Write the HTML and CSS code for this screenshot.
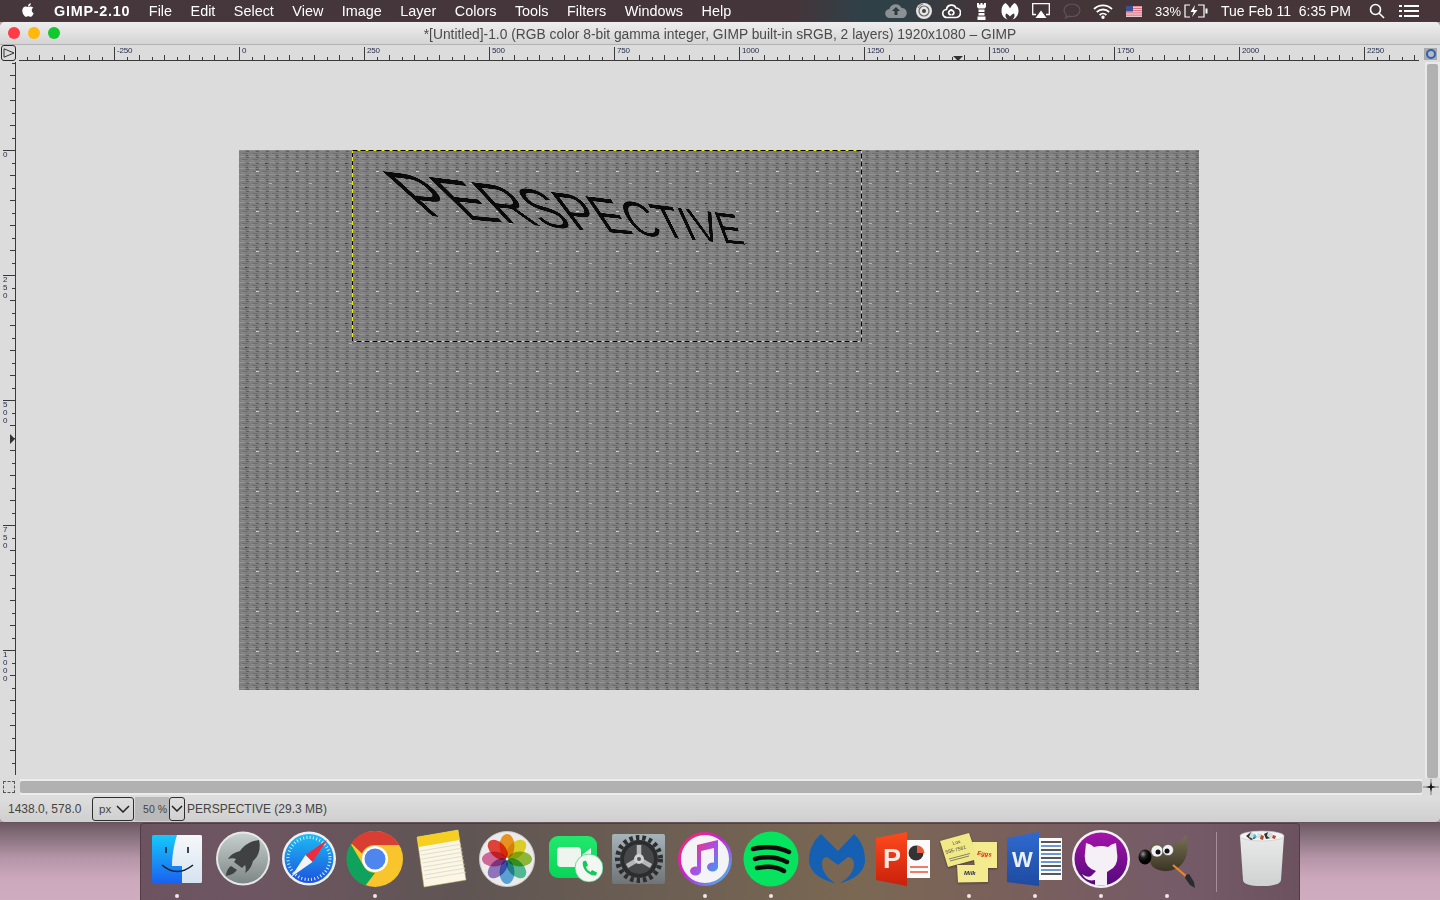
FILE: index.html
```html
<!DOCTYPE html>
<html lang="en">
<head>
<meta charset="utf-8">
<title>GIMP-2.10</title>
<link rel="stylesheet" href="styles.css">
</head>
<body>
<header class="menubar">
  <svg class="apple" viewBox="0 0 24 24" width="18" height="18"><path fill="#fff" d="M17.05 20.28c-.98.95-2.05.8-3.08.35-1.09-.46-2.09-.48-3.24 0-1.44.62-2.2.44-3.06-.35C2.79 15.25 3.51 7.59 9.05 7.31c1.35.07 2.29.74 3.08.8 1.18-.24 2.31-.93 3.57-.84 1.51.12 2.65.72 3.4 1.8-3.12 1.87-2.38 5.98.48 7.13-.57 1.5-1.31 2.99-2.54 4.09zM12.03 7.25c-.15-2.23 1.66-4.07 3.74-4.25.29 2.58-2.34 4.5-3.74 4.25z"/></svg>
  <nav class="menus">
    <span class="appname">GIMP-2.10</span><span>File</span><span>Edit</span><span>Select</span><span>View</span><span>Image</span><span>Layer</span><span>Colors</span><span>Tools</span><span>Filters</span><span>Windows</span><span>Help</span>
  </nav>
  <div class="status-icons">
    <svg width="22" height="16" viewBox="0 0 22 16"><path fill="#8b9094" d="M5 15a4.500 4.500 0 0 1-.6-9A6.500 6.500 0 0 1 16.600 5 5 5 0 0 1 17 15z"/><path fill="#2f3a40" d="M11 4l4 4h-2.500v4h-3V8H7z"/></svg>
    <svg width="18" height="18" viewBox="0 0 18 18"><circle cx="9" cy="9" r="8" fill="#e6e6e6"/><circle cx="9" cy="9" r="5" fill="none" stroke="#666" stroke-width="1.200"/><circle cx="9" cy="9" r="2" fill="#444"/><path d="M3 6a7 7 0 0 1 5-4" stroke="#777" fill="none"/></svg>
    <svg width="20" height="16" viewBox="0 0 20 16" fill="none" stroke="#fff" stroke-width="1.700"><path d="M6 14.500a4 4 0 0 1-.5-8A5 5 0 0 1 15 5a4.700 4.700 0 0 1-.5 9.500z"/><path d="M12.500 8.500C11 6.500 9 6.800 8 8.500S8 12 10 11.500M8 8.500c1.500-2 3.500-1.700 4.500 0s0 3.500-2 3"/></svg>
    <svg width="11" height="17" viewBox="0 0 11 17" fill="#fff"><path d="M1 0h2v1.500h1.500V0h2v1.500H8V0h2v4L8.500 5.500h-6L1 4zM2.500 6.500h6V9h-6zM2.500 10h6v2.500h-6zM1.500 13.500h8V17h-8z"/></svg>
    <svg width="18" height="17" viewBox="0 0 18 17"><path fill="#fff" d="M4.500 0C2 1.500.5 4 .5 8c0 4 2.500 7.500 6 8.500-2-1.500-2.500-4-1.500-6 1 0 3 1.500 4 3 1-1.500 3-3 4-3 1 2 .5 4.500-1.500 6 3.500-1 6-4.500 6-8.500s-1.500-6.500-4-8C11.500 1.500 10 3.500 9 5.500 8 3.500 6.500 1.500 4.500 0z"/></svg>
    <svg width="18" height="16" viewBox="0 0 18 16"><path fill="none" stroke="#fff" stroke-width="1.300" d="M4 11.500H.7V.7h16.600v10.800H14"/><path fill="#fff" d="M9 7.500l5.500 7.500h-11z"/></svg>
    <svg width="18" height="16" viewBox="0 0 18 16"><path fill="none" stroke="#5e5659" stroke-width="1.200" d="M9 1c4.500 0 8 2.700 8 6.200S13.500 13.500 9 13.500c-1 0-2-.2-3-.4L2.500 15l1-3C1.800 10.900 1 9.200 1 7.200 1 3.700 4.500 1 9 1z"/></svg>
    <svg width="20" height="15" viewBox="0 0 20 15" fill="none" stroke="#fff" stroke-width="1.800"><path d="M1 5a13 13 0 0 1 18 0M3.800 8a9 9 0 0 1 12.400 0M6.600 11a5 5 0 0 1 6.800 0"/><circle cx="10" cy="13.300" r=".8" fill="#fff"/></svg>
    <svg width="16" height="11" viewBox="0 0 16 11"><rect width="16" height="11" fill="#f2f0f2"/><path stroke="#d8566a" stroke-width=".9" d="M0 .8h16M0 2.600h16M0 4.400h16M0 6.200h16M0 8h16M0 9.800h16"/><rect width="7" height="5.500" fill="#3f4f96"/></svg>
    <span class="battery-pct">33%</span>
    <svg class="battery" width="24" height="14" viewBox="0 0 24 14" fill="none" stroke="#fff" stroke-width="1.200"><path d="M6 1H1v12h5M14 1h6v12h-6"/><path fill="#fff" stroke="none" d="M11 1L6.500 8h3.200L8 13l5.500-7H10z M21.500 4.500h2v5h-2z"/></svg>
    <span class="clock">Tue Feb 11&nbsp; 6:35 PM</span>
    <svg class="search" width="16" height="16" viewBox="0 0 16 16" fill="none" stroke="#fff" stroke-width="1.600"><circle cx="6.500" cy="6.500" r="5"/><path d="M10.200 10.200L15 15"/></svg>
    <svg class="list" width="20" height="12" viewBox="0 0 20 12" fill="#fff"><rect y="0" width="3" height="2"/><rect y="5" width="3" height="2"/><rect y="10" width="3" height="2"/><rect x="5" y="0" width="15" height="2"/><rect x="5" y="5" width="15" height="2"/><rect x="5" y="10" width="15" height="2"/></svg>
  </div>
</header>

<main class="window">
  <div class="titlebar">
    <div class="lights"><i class="light red"></i><i class="light amber"></i><i class="light green"></i></div>
    <div class="title">*[Untitled]-1.0 (RGB color 8-bit gamma integer, GIMP built-in sRGB, 2 layers) 1920x1080 – GIMP</div>
  </div>

  <div class="row-top">
    <div class="corner"><svg width="12" height="10" viewBox="0 0 12 10"><path fill="none" stroke="#333" d="M1 .8v8.400L11 5z"/></svg></div>
    <div class="ruler-h">
      <span class="hspacer"></span>
      <span class="hcell">-250</span><span class="hcell">0</span><span class="hcell">250</span><span class="hcell">500</span><span class="hcell">750</span><span class="hcell">1000</span><span class="hcell">1250</span><span class="hcell">1500</span><span class="hcell">1750</span><span class="hcell">2000</span><span class="hcell">2250</span>
      <i class="pointer-h"></i>
    </div>
    <div class="nav-col"><span class="nav-btn"><i></i></span></div>
  </div>

  <div class="row-mid">
    <div class="ruler-v">
      <span class="vspacer"></span>
      <span class="vcell">0</span><span class="vcell">2<br>5<br>0</span><span class="vcell">5<br>0<br>0</span><span class="vcell">7<br>5<br>0</span><span class="vcell">1<br>0<br>0<br>0</span>
      <i class="pointer-v"></i>
    </div>
    <div class="stage">
      <div class="canvas">
        <svg class="texture" width="960" height="540" viewBox="0 0 960 540">
          <defs>
            <pattern id="tile" width="40" height="40" patternUnits="userSpaceOnUse">
              <rect width="40" height="40" fill="#7f7f7f"/>
              <g fill="none" stroke-width="1">
                <g stroke-dasharray="6 4">
                  <path stroke="#939393" d="M0 .5h40M0 6.500h40M0 12.500h40M0 18.500h40M0 24.500h40M0 30.500h40M0 36.500h40"/>
                  <path stroke="#6e6e6e" d="M3 3.500h40M-7 3.500h10M3 9.500h40M-7 9.500h10M3 15.500h40M-7 15.500h10M3 21.500h40M-7 21.500h10M3 27.500h40M-7 27.500h10M3 33.500h40M-7 33.500h10M3 39.500h40M-7 39.500h10"/>
                </g>
                <g stroke-dasharray="3 7">
                  <path stroke="#5e5e5e" d="M7 1.500h40M-3 1.500h10M7 7.500h40M-3 7.500h10M7 13.500h40M-3 13.500h10M7 19.500h40M-3 19.500h10M7 25.500h40M-3 25.500h10M7 31.500h40M-3 31.500h10M7 37.500h40M-3 37.500h10"/>
                  <path stroke="#8e8e8e" d="M2 4.500h40M-8 4.500h10M2 10.500h40M-8 10.500h10M2 16.500h40M-8 16.500h10M2 22.500h40M-8 22.500h10M2 28.500h40M-8 28.500h10M2 34.500h40M-8 34.500h10"/>
                </g>
                <g stroke-dasharray="2 8">
                  <path stroke="#565656" d="M7 5.500h40M-3 5.500h10M7 17.500h40M-3 17.500h10M7 29.500h40M-3 29.500h10"/>
                </g>
                <path stroke="#3c3c3c" d="M26 13.500h2M6 37.500h2"/>
                <path stroke="#cdcdcd" d="M17 21.500h3"/>
                <path stroke="#b2b2b2" d="M30 33.500h3"/>
              </g>
            </pattern>
          </defs>
          <rect width="960" height="540" fill="url(#tile)"/>
          <rect class="ants-base" x="113.500" y=".5" width="509" height="191"/>
          <path class="ants-left" d="M113.500 191V.5"/>
          <path class="ants-rest" d="M113.500 .5H622.500V191.500H113.500"/>
        </svg>
        <span class="warped">PERSPECTIVE</span>
      </div>
    </div>
    <div class="vscroll"><span class="vthumb"></span></div>
  </div>

  <div class="row-scroll">
    <span class="qmask"></span>
    <div class="hscroll"><span class="hthumb"></span></div>
    <svg class="zoomfit" width="16" height="16" viewBox="0 0 16 16"><path stroke="#555" stroke-width=".7" d="M8 0v16M0 8h16" fill="none"/><path fill="#111" d="M7 7l1-4 1 4 4 1-4 1-1 4-1-4-4-1z"/></svg>
  </div>

  <div class="statusbar">
    <span class="coords">1438.0, 578.0</span>
    <span class="combo unit">px<svg width="14" height="8" viewBox="0 0 14 8"><path fill="none" stroke="#222" stroke-width="1.500" d="M1 1l6 6 6-6"/></svg></span>
    <span class="zoomval">50 %</span>
    <span class="combo zoomdrop"><svg width="12" height="7" viewBox="0 0 12 7"><path fill="none" stroke="#222" stroke-width="1.500" d="M1 1l5 5 5-5"/></svg></span>
    <span class="layerinfo">PERSPECTIVE (29.3 MB)</span>
  </div>
</main>

<footer class="desktop">
  <div class="dock">
    <div class="app on"><svg viewBox="0 0 60 60" width="60" height="60"><defs><linearGradient id="fl" x1="0" y1="0" x2="0" y2="1"><stop offset="0" stop-color="#16c9fb"/><stop offset="1" stop-color="#1a62f0"/></linearGradient><linearGradient id="fr" x1="0" y1="0" x2="0" y2="1"><stop offset="0" stop-color="#f6f8fa"/><stop offset="1" stop-color="#d5e3f0"/></linearGradient></defs><rect x="5" y="6" width="50" height="48" rx="1.500" fill="url(#fl)"/><path fill="url(#fr)" d="M30 6h23.500A1.500 1.500 0 0 1 55 7.500v45a1.500 1.500 0 0 1-1.500 1.500H35V37H25c0-10 2-22 5-31z"/><path d="M19 18v6M41 18v6" stroke="#1a2a3a" stroke-width="1.700"/><path d="M15 36q15 13 31 0" fill="none" stroke="#14202c" stroke-width="1.600"/></svg><i class="dot"></i></div>
    <div class="app"><svg viewBox="0 0 60 60" width="60" height="60"><defs><linearGradient id="lp" x1="0" y1="0" x2="0" y2="1"><stop offset="0" stop-color="#c8d0cf"/><stop offset="1" stop-color="#7d8585"/></linearGradient></defs><circle cx="30" cy="29.500" r="27" fill="#e4e8e8"/><circle cx="30" cy="29.500" r="25" fill="url(#lp)"/><path fill="#3f4142" d="M46 11c-7 1-14 4-19 11-4 1-9 3-12 8 3-1 6-1 8 0l-2 3 8 6 3-3c1 2 1 5 0 8 5-3 7-8 8-12 6-5 8-13 6-21z"/><path fill="#3f4142" d="M18 37c-3 2-5 6-5 10 4-1 8-2 11-6z"/></svg></div>
    <div class="app"><svg viewBox="0 0 60 60" width="60" height="60"><defs><linearGradient id="sf" x1="0" y1="0" x2="0" y2="1"><stop offset="0" stop-color="#1dbcf2"/><stop offset="1" stop-color="#1c52e0"/></linearGradient></defs><circle cx="30" cy="29.500" r="27" fill="#eef2f4"/><circle cx="30" cy="29.500" r="24.500" fill="url(#sf)"/><circle cx="30" cy="29.500" r="21" fill="none" stroke="#d8eefc" stroke-width="3" stroke-dasharray="1 2.300"/><path fill="#ef2b3c" d="M48 11L26.500 26 33.500 33z"/><path fill="#f2f4f6" d="M12 48l14.500-22 7 7z"/></svg></div>
    <div class="app on"><svg viewBox="0 0 60 60" width="60" height="60"><circle cx="30" cy="30" r="28" fill="#f9c52c"/><path fill="#da3e33" d="M30 2a28 28 0 0 1 24.300 14H30a14 14 0 0 0-13 8.500L6.500 14.500A28 28 0 0 1 30 2z"/><path fill="#0fa25c" d="M5.800 15l12 20.500A14 14 0 0 0 30 44l-9.500 12.500A28 28 0 0 1 5.800 15z"/><circle cx="30" cy="30" r="13" fill="#fff"/><circle cx="30" cy="30" r="10.500" fill="#4f85ee"/></svg><i class="dot"></i></div>
    <div class="app"><svg viewBox="0 0 60 60" width="60" height="60"><path fill="#fbf7e4" stroke="#c9b76a" stroke-width=".5" d="M6 8l41-7 8 50-42 7z"/><path fill="#f6cf22" d="M6 8l41-7 1.700 10-41 7z"/><path d="M9 22l41-6.800M10 26l41-6.800M10.700 30l41-6.800M11.300 34l41-6.800M12 38l41-6.800M12.600 42l41-6.800M13.300 46l41-6.800M14 50l41-6.800" stroke="#d8d6cd" stroke-width=".8"/></svg></div>
    <div class="app"><svg viewBox="0 0 60 60" width="60" height="60"><circle cx="30" cy="30" r="27.500" fill="#eceaea" stroke="#c9c9c9"/><g class="petals"><ellipse cx="30" cy="17" rx="7.500" ry="12" fill="#f8a020"/><ellipse cx="30" cy="17" rx="7.500" ry="12" fill="#ede02a" transform="rotate(45 30 30)"/><ellipse cx="30" cy="17" rx="7.500" ry="12" fill="#9ac83c" transform="rotate(90 30 30)"/><ellipse cx="30" cy="17" rx="7.500" ry="12" fill="#58c8a0" transform="rotate(135 30 30)"/><ellipse cx="30" cy="17" rx="7.500" ry="12" fill="#62aee6" transform="rotate(180 30 30)"/><ellipse cx="30" cy="17" rx="7.500" ry="12" fill="#9a80cc" transform="rotate(225 30 30)"/><ellipse cx="30" cy="17" rx="7.500" ry="12" fill="#dd70a8" transform="rotate(270 30 30)"/><ellipse cx="30" cy="17" rx="7.500" ry="12" fill="#f0483e" transform="rotate(315 30 30)"/></g><circle cx="30" cy="30" r="1.200" fill="#fff"/></svg></div>
    <div class="app"><svg viewBox="0 0 60 60" width="60" height="60"><defs><linearGradient id="ft" x1="0" y1="0" x2="0" y2="1"><stop offset="0" stop-color="#22e86c"/><stop offset="1" stop-color="#08d558"/></linearGradient></defs><rect x="6" y="7" width="48" height="42" rx="9" fill="url(#ft)"/><rect x="14" y="18" width="24" height="20" rx="4" fill="#eef5ee"/><path fill="#eef5ee" d="M39 26l9-7v16z"/><circle cx="46" cy="39" r="14" fill="#f3f7f3" stroke="#0fc95a" stroke-width=".6"/><path fill="#16c75a" d="M40 32.500l3-1 2 5-2 1.500c.5 2 2.500 4 4.500 5l1.500-2 5 2.500-1 3c-7 1-15-7-13-14.500z"/></svg></div>
    <div class="app"><svg viewBox="0 0 60 60" width="60" height="60"><defs><linearGradient id="sp" x1="0" y1="0" x2="0" y2="1"><stop offset="0" stop-color="#a6b4ba"/><stop offset="1" stop-color="#6f7477"/></linearGradient></defs><rect x="3" y="5" width="53" height="50" rx="2" fill="url(#sp)"/><circle cx="30" cy="30" r="21.500" fill="none" stroke="#2e2e2e" stroke-width="5" stroke-dasharray="3.500 3"/><circle cx="30" cy="30" r="19" fill="#2c2d2e"/><circle cx="30" cy="30" r="15" fill="#47484a"/><path d="M30 30V16M30 30l12 7M30 30l-12 7" stroke="#b5b7b8" stroke-width="4.500"/><circle cx="30" cy="30" r="5" fill="#cfd1d2"/><circle cx="30" cy="30" r="2" fill="#555"/></svg></div>
    <div class="app on"><svg viewBox="0 0 60 60" width="60" height="60"><defs><linearGradient id="it" x1="0" y1="0" x2="1" y2="1"><stop offset="0" stop-color="#fb2c5c"/><stop offset=".45" stop-color="#c620d8"/><stop offset="1" stop-color="#39c8f2"/></linearGradient><linearGradient id="nt" x1="0" y1="0" x2="1" y2="1"><stop offset="0" stop-color="#fb3158"/><stop offset=".5" stop-color="#b04ce0"/><stop offset="1" stop-color="#2aa8f6"/></linearGradient></defs><circle cx="30" cy="30" r="25.500" fill="#f4f4f6" stroke="url(#it)" stroke-width="3"/><path fill="url(#nt)" d="M22 16l21-5v27a5.500 4.500 0 1 1-4-4.300V19l-13 3v20a5.500 4.500 0 1 1-4-4.300z"/></svg><i class="dot"></i></div>
    <div class="app on"><svg viewBox="0 0 60 60" width="60" height="60"><circle cx="30" cy="30" r="27.500" fill="#05e35f"/><path d="M12 20c12-3 26-2 36 3M14 30c11-3 23-2 32 3M16 39c9-2 19-2 27 3" fill="none" stroke="#0c0c0c" stroke-width="4.500" stroke-linecap="round"/></svg><i class="dot"></i></div>
    <div class="app"><svg viewBox="0 0 60 60" width="60" height="60"><path fill="#1660b4" d="M14 5L31 22 47 5C54 11 58 20 58 31 58 43 47 51 33 54 42 49 47 42 47 35 47 31 44 28 41 28L31 36 20 28C17 28 15 31 15 35 15 42 20 49 28 54 14 51 2 43 2 31 2 20 7 11 14 5z"/></svg></div>
    <div class="app"><svg viewBox="0 0 60 60" width="60" height="60"><rect x="34" y="11" width="23" height="38" fill="#fbfbfb"/><circle cx="43" cy="24" r="7.500" fill="#333"/><path d="M44 16.500a7.500 7.500 0 0 1 7.500 7.500H44z" fill="#e85a3a"/><path d="M37 38h18M37 43h18" stroke="#e8543a" stroke-width="1.500"/><defs><linearGradient id="pp" x1="0" y1="0" x2="0" y2="1"><stop offset="0" stop-color="#ff4a1c"/><stop offset="1" stop-color="#c9200c"/></linearGradient></defs><path fill="url(#pp)" d="M3 9l31-6v54L3 51z"/><text class="doc-letter" x="10" y="39">P</text></svg></div>
    <div class="app on"><svg viewBox="0 0 60 60" width="60" height="60"><g class="sticky-shadow"><path fill="#f3eb8e" d="M33 13h25v26H36z"/><path fill="#f3eb8e" d="M18 36h31v17l-30 .5z"/><path fill="#f1e986" d="M1 12L30 4l9 26-30 8z"/></g><text class="sticky-t" x="14" y="16" transform="rotate(-15 14 16)">Lox</text><text class="sticky-t" x="7" y="25" transform="rotate(-15 7 25)">555-7561</text><path d="M10 30l21-5.500M11 32l19-5" stroke="#555" stroke-width=".7"/><text class="sticky-r" x="38" y="26" transform="rotate(6 38 26)">Eggs</text><text class="sticky-b" x="25" y="46">Milk</text></svg><i class="dot"></i></div>
    <div class="app on"><svg viewBox="0 0 60 60" width="60" height="60"><rect x="34" y="9" width="23" height="42" fill="#fbfbfb"/><path d="M36 13h20M36 21h20M36 29h20M36 37h20M36 45h20" stroke="#222" stroke-width="1.300"/><path d="M36 17h20M36 25h20M36 33h20M36 41h20" stroke="#3d78c8" stroke-width="1.300"/><defs><linearGradient id="wd" x1="0" y1="0" x2="0" y2="1"><stop offset="0" stop-color="#2f6ad0"/><stop offset="1" stop-color="#1f4aa0"/></linearGradient></defs><path fill="url(#wd)" d="M2 9l32-6v54L2 53z"/><text class="doc-letter word" x="7" y="38">W</text></svg><i class="dot"></i></div>
    <div class="app on"><svg viewBox="0 0 60 60" width="60" height="60"><defs><linearGradient id="gh" x1="0" y1="0" x2="0" y2="1"><stop offset="0" stop-color="#a414a8"/><stop offset="1" stop-color="#54087c"/></linearGradient><clipPath id="ghc"><circle cx="30" cy="30" r="26.500"/></clipPath></defs><circle cx="30" cy="30" r="29" fill="#f2f2f4"/><circle cx="30" cy="30" r="26.500" fill="url(#gh)"/><path clip-path="url(#ghc)" fill="#f5f0f5" d="M14 24l1-10q5 1 8 4 7-2 14 0 3-3 8-4l1 10q2 12-7 17l-3 2v17H24v-9q-9 2-13-6 5 4 9 2l5-5Q12 38 14 24z"/></svg><i class="dot"></i></div>
    <div class="app on"><svg viewBox="0 0 60 60" width="60" height="60"><defs><linearGradient id="wb" x1="0" y1="0" x2="0" y2="1"><stop offset="0" stop-color="#7a7156"/><stop offset="1" stop-color="#3a3524"/></linearGradient><radialGradient id="ns" cx=".35" cy=".3"><stop offset="0" stop-color="#999"/><stop offset=".5" stop-color="#222"/><stop offset="1" stop-color="#000"/></radialGradient></defs><path fill="url(#wb)" d="M12 24c1-6 3-10 5-12 2 4 9 5 17 4 7-2 12-5 15-10 2 10 3 22-5 30-8 8-22 8-29 1-2-3-3-8-3-13z"/><ellipse cx="8" cy="28" rx="6.500" ry="7.500" fill="url(#ns)"/><circle cx="20" cy="22" r="6" fill="#f2f2f2" stroke="#444" stroke-width=".5"/><circle cx="31" cy="21" r="5.500" fill="#f2f2f2" stroke="#444" stroke-width=".5"/><circle cx="21" cy="23" r="2.500" fill="#111"/><circle cx="30" cy="22" r="2.500" fill="#111"/><path d="M36 36l14 12" stroke="#e58a2c" stroke-width="2.200"/><path d="M49 46l3-1 5 8 1 6-5-3-5-7z" fill="#2b2b2b"/></svg><i class="dot"></i></div>
    <div class="separator"></div>
    <div class="app"><svg viewBox="0 0 60 60" width="60" height="60"><defs><linearGradient id="tr" x1="0" y1="0" x2="0" y2="1"><stop offset="0" stop-color="#e9ebeb"/><stop offset="1" stop-color="#cfd2d2"/></linearGradient></defs><path fill="url(#tr)" d="M8 7l3 44q.5 6 19 6t19-6l3-44z"/><ellipse cx="30" cy="7" rx="22" ry="5" fill="#f2f4f4" stroke="#bfc3c3" stroke-width=".6"/><path fill="#333" d="M14 7l5-4 5 6-5 2zM32 5l4-2 3 6-5 1z"/><path fill="#d8dcdc" d="M19 3l4 2-2 5-4-2zM36 2l5 3-2 5-4-3zM26 4l4 1v5l-5-1z"/><path fill="#29c7d8" d="M21 7l2-2 2 3-2 1z"/><path fill="#b5482a" d="M29 6l3 1-1 4-3-1zM41 6l3 1-1 3-3-1z"/></svg></div>
  </div>
</footer>
</body>
</html>
```

FILE: styles.css
```css
* { box-sizing: border-box; }
html, body { margin: 0; height: 100%; }
body {
  width: 1440px; height: 900px; overflow: hidden;
  display: flex; flex-direction: column;
  font-family: "Liberation Sans", Arial, sans-serif;
  background: #cba8bb;
}

/* menu bar */
.menubar {
  height: 22px; flex: none;
  display: flex; align-items: center;
  padding-left: 19px; padding-right: 21px;
  color: #fff; font-size: 14px;
  background: linear-gradient(90deg, #46373c 0, #44353a 55%, #2f4148 60%, #303f46 63%, #433539 68%, #473539 100%);
}
.apple { flex: none; margin-right: 17px; margin-top: -2px; }
.menus { display: flex; gap: 18.500px; white-space: nowrap; font-size: 14.400px; }
.appname { font-weight: 700; letter-spacing: .75px; }
.status-icons {
  margin-left: auto; width: 537px; flex: none;
  display: grid; align-items: center; justify-items: center;
  grid-template-columns: 28px 28px 26px 34px 24px 38px 24px 38px 24px 38px 24px 13px 130px 16px 20px 12px 20px;
  white-space: nowrap;
}
.battery-pct { justify-self: start; margin-left: 9px; font-size: 13px; }
.battery { grid-column: 11; justify-self: end; }
.clock { grid-column: 13; justify-self: start; width: 130px; }
.search { grid-column: 15; }
.list { grid-column: 17; }

/* window */
.window {
  height: 800px; flex: none;
  display: flex; flex-direction: column;
  background: #dcdcdc;
  border-radius: 5px;
  box-shadow: 0 0 0 1px rgba(90, 70, 80, .25);
  position: relative;
}
.titlebar {
  height: 23px; flex: none;
  display: flex; align-items: center;
  background: linear-gradient(#eeeeee, #d4d4d4);
  border-bottom: 1px solid #b2b2b2;
  border-radius: 5px 5px 0 0;
}
.lights { display: flex; gap: 8px; padding-left: 8px; width: 68px; flex: none; }
.light { width: 12px; height: 12px; border-radius: 50%; }
.red { background: #ff3b47; }
.amber { background: #ffb80b; }
.green { background: #10c92f; }
.title {
  flex: 1; margin-left: -68px; padding-top: 2px; text-align: center;
  font-size: 13.800px; color: #4b4b4b; white-space: nowrap;
}

.row-top { height: 17px; flex: none; display: flex; }
.corner {
  width: 15px; height: 16px; margin: 0 3px 0 1px; flex: none;
  border: 1px solid #2a2a2a; border-radius: 3px;
  display: flex; align-items: center; justify-content: center;
}
.ruler-h {
  width: 1400px; flex: none; height: 16px; position: relative;
  display: flex; overflow: hidden;
  font-size: 8px; line-height: 7px; color: #252d4c;
  background:
    linear-gradient(#3a3a3a, #3a3a3a) 0 100% / 100% 1px no-repeat,
    linear-gradient(90deg, #3a3a3a 1px, transparent 1px) 20px 100% / 25px 6px repeat-x,
    linear-gradient(90deg, #3a3a3a 1px, transparent 1px) 8px 100% / 25px 4px repeat-x;
}
.hspacer { width: 95px; flex: none; }
.hcell {
  width: 125px; flex: none; height: 14px; margin-top: 2px;
  border-left: 1px solid #3a3a3a; padding-left: 2px;
  letter-spacing: -.2px;
}
.pointer-h {
  position: absolute; left: 934px; bottom: 0;
  border: 5px solid transparent; border-top-color: #333; border-bottom: 0;
}
.nav-col { flex: 1; display: flex; justify-content: center; padding-top: 3px; padding-left: 2px; }
.nav-btn {
  width: 13px; height: 12px; background: #a9a9ab;
  display: flex; align-items: center; justify-content: center;
}
.nav-btn i {
  width: 10px; height: 10px; border-radius: 50%;
  background: #b9b9b9; border: 2px solid #2a62b8;
}

.row-mid { height: 716px; flex: none; display: flex; }
.ruler-v {
  width: 16px; flex: none; height: 713px; position: relative;
  display: flex; flex-direction: column; overflow: hidden;
  font-size: 8px; line-height: 8px; color: #252d4c;
  background:
    linear-gradient(#3a3a3a, #3a3a3a) 100% 0 / 1px 100% no-repeat,
    linear-gradient(#3a3a3a 1px, transparent 1px) 100% 13px / 6px 25px repeat-y,
    linear-gradient(#3a3a3a 1px, transparent 1px) 100% 1px / 4px 25px repeat-y;
}
.vspacer { height: 88px; flex: none; }
.vcell {
  height: 125px; flex: none; padding: 1px 0 0 3px;
  background: linear-gradient(#3a3a3a, #3a3a3a) 3px 0 / 12px 1px no-repeat;
}
.pointer-v {
  position: absolute; left: 10px; top: 372px;
  border: 5px solid transparent; border-left-color: #333; border-right: 0;
}
.stage { flex: 1; padding: 88px 0 0 223px; overflow: hidden; }
.canvas { width: 960px; height: 540px; position: relative; }
.texture { display: block; }
.ants-base { fill: none; stroke: #f5ec00; stroke-width: 1; }
.ants-left { fill: none; stroke: #000; stroke-width: 1; stroke-dasharray: 4 4; }
.ants-rest { fill: none; stroke: #000; stroke-width: 1; stroke-dasharray: 5 3; }
.warped {
  position: absolute; left: 0; top: 0;
  width: 273px; height: 28px; white-space: nowrap;
  font-size: 40px; line-height: 27.500px; color: #0a0a0a;
  text-indent: -3px;
  transform-origin: 0 0;
  transform: translate(-239px, -150px) matrix3d(2.333, .4658, 0, .0014337, 3.638, 2.546, 0, .004217, 0, 0, 1, 0, 383, 172, 0, 1);
}
.vscroll {
  width: 19px; flex: none;
  padding: 2px 2px 0 6px;
  background: linear-gradient(#e9e9e9, #e9e9e9) 4px 0 / 15px 100% no-repeat;
}
.vthumb { display: block; height: 714px; background: #b1b1b1; border-radius: 2px; }

.row-scroll { height: 18px; flex: none; display: flex; align-items: center; }
.qmask {
  width: 12px; height: 12px; margin: 0 5px 0 3px; flex: none;
  border: 1px dashed #555; background: #dadada;
}
.hscroll {
  width: 1402px; height: 16px; flex: none;
  padding: 2px 0; background: #ececec;
}
.hthumb { display: block; height: 12px; background: #b1b1b1; border-radius: 2px; }
.zoomfit { margin-left: 1px; }

.statusbar {
  height: 26px; flex: none;
  display: flex; align-items: center;
  font-size: 12px; color: #444;
  padding-left: 8px; padding-bottom: 1px;
  background: linear-gradient(#dedede, #cfcfcf);
  border-radius: 0 0 5px 5px;
}
.coords { width: 84px; flex: none; }
.combo {
  height: 24px; flex: none;
  border: 1px solid #2e2e2e; border-radius: 3px;
  display: flex; align-items: center;
}
.unit { width: 42px; font-size: 11.500px; padding-left: 6px; gap: 5px; margin-right: 1px; }
.zoomval {
  width: 34px; height: 24px; flex: none; background: #b9b9b9;
  font-size: 10.500px; display: flex; align-items: center; justify-content: flex-end; padding-right: 2px;
}
.zoomdrop { width: 16px; justify-content: center; margin-right: 2px; }
.layerinfo { white-space: nowrap; }

/* desktop and dock */
.desktop {
  flex: 1; display: flex; justify-content: center;
  padding-top: 1px;
  background: linear-gradient(#6a5660 0, #86707c 14px, #b595a7 36px, #cba8bc 56px, #cfacc0 100%);
}
.dock {
  width: 1160px; height: 77px; flex: none;
  display: flex; padding: 5px 5px 0 3px;
  border: 1px solid rgba(60, 40, 50, .55); border-bottom: 0;
  border-radius: 4px 4px 0 0;
  background: linear-gradient(90deg, #6d5360 0, #6d5661 10%, #5f5553 28%, #6e6053 48%, #7b6853 62%, #795f5c 76%, #755b68 90%, #6b525e 100%);
}
.app {
  width: 66px; flex: none;
  display: flex; flex-direction: column; align-items: center; gap: 5px;
}
.app svg { display: block; flex: none; }
.dot { width: 4px; height: 4px; border-radius: 50%; background: #f4e4ea; }
.separator { width: 1px; height: 60px; flex: none; margin: 3px 12px 0 16px; background: rgba(240, 225, 230, .4); }
.petals ellipse { mix-blend-mode: multiply; }
.doc-letter { font: 700 27px "Liberation Sans", Arial, sans-serif; fill: #fbe9e2; }
.word { font-size: 22px; fill: #e8f0fb; }
.sticky-shadow { filter: drop-shadow(0 1px 1px rgba(0, 0, 0, .4)); }
.sticky-t { font: 5px "Liberation Sans", Arial, sans-serif; fill: #444; }
.sticky-r { font: italic 700 6px "Liberation Sans", Arial, sans-serif; fill: #e0241c; }
.sticky-b { font: italic 700 6px "Liberation Sans", Arial, sans-serif; fill: #2a2a60; }
```
